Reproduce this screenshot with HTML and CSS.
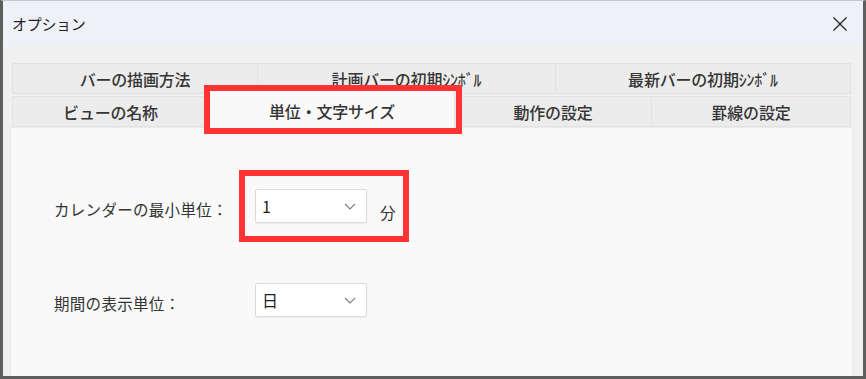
FILE: index.html
```html
<!DOCTYPE html>
<html lang="ja">
<head>
    <meta charset="UTF-8">
    <title>オプション</title>
    <link rel="stylesheet" href="styles.css">
</head>
<body>
    <div class="window">
        <header class="titlebar">
            <span class="title">オプション</span>
            <span class="close-btn" aria-label="閉じる">
                <svg width="16" height="16" viewBox="0 0 16 16"><path d="M1.5 1.5 L14.5 14.5 M14.5 1.5 L1.5 14.5" stroke="#222" stroke-width="1.3" fill="none"/></svg>
            </span>
        </header>
        <main class="content">
            <div class="tabs">
                <div class="tab-row row-top">
                    <div class="tab">バーの描画方法</div>
                    <div class="tab">計画バーの初期ｼﾝﾎﾞﾙ</div>
                    <div class="tab">最新バーの初期ｼﾝﾎﾞﾙ</div>
                </div>
                <div class="tab-row row-bottom">
                    <div class="tab">ビューの名称</div>
                    <div class="tab tab-active mark">単位・文字サイズ</div>
                    <div class="tab">動作の設定</div>
                    <div class="tab">罫線の設定</div>
                </div>
            </div>
            <section class="panel">
                <div class="field">
                    <span class="field-label">カレンダーの最小単位：</span>
                    <div class="field-group mark mark-field">
                        <div class="dropdown">
                            <span class="dropdown-value">1</span>
                            <svg class="chevron" width="12" height="7" viewBox="0 0 12 7"><path d="M1 1 L6 6 L11 1" stroke="#808080" stroke-width="1.2" fill="none"/></svg>
                        </div>
                        <span class="unit">分</span>
                    </div>
                </div>
                <div class="field field-second">
                    <span class="field-label">期間の表示単位：</span>
                    <div class="field-group">
                        <div class="dropdown">
                            <span class="dropdown-value">日</span>
                            <svg class="chevron" width="12" height="7" viewBox="0 0 12 7"><path d="M1 1 L6 6 L11 1" stroke="#808080" stroke-width="1.2" fill="none"/></svg>
                        </div>
                    </div>
                </div>
            </section>
        </main>
    </div>
</body>
</html>
```

FILE: styles.css
```css
* {
    box-sizing: border-box;
}

html, body {
    margin: 0;
    padding: 0;
}

body {
    font-family: "Noto Sans CJK JP", "Noto Sans", sans-serif;
    color: #333;
    background: #5e5e5e;
    width: 866px;
    height: 379px;
    overflow: hidden;
}

.window {
    width: 866px;
    height: 379px;
    background: #f0f0f0;
    border: 3px solid #5e5e5e;
    border-top: 1px solid #c9c9c9;
    display: flex;
    flex-direction: column;
}

.titlebar {
    height: 45px;
    flex: none;
    background: #eef2f8;
    display: flex;
    align-items: center;
    justify-content: space-between;
    padding: 0 15px 0 9px;
}

.title {
    font-size: 15px;
    color: #1f1f1f;
    letter-spacing: -0.3px;
}

.close-btn {
    display: flex;
    width: 16px;
    height: 16px;
}

.content {
    flex: 1;
    display: flex;
    flex-direction: column;
    padding: 17px 10px 0 7px;
}

.tabs {
    margin: 0 2px 0 2px;
    font-size: 16px;
    font-weight: 500;
    color: #353535;
}

.tab-row {
    display: grid;
    grid-template-rows: 31px;
    align-items: end;
}

.row-top {
    grid-template-columns: 246px 298px 295px;
    margin-bottom: 2px;
}

.row-bottom {
    grid-template-columns: 197px 246px 197px 199px;
}

.tab {
    height: 31px;
    display: flex;
    align-items: center;
    justify-content: center;
    background: #ececec;
    border: 1px solid #e2e2e2;
    border-left: none;
    white-space: nowrap;
    letter-spacing: -0.2px;
}

.tab:first-child {
    border-left: 1px solid #e2e2e2;
}

.tab-active {
    height: 38px;
    margin-bottom: -1px;
    padding-top: 2px;
    background: #f9f9f9;
    border: 1px solid #e4e4e4;
    border-bottom: none;
    z-index: 1;
}

.mark {
    position: relative;
}

.mark::after {
    content: "";
    position: absolute;
    top: -6px;
    left: -6px;
    right: -8px;
    bottom: -6px;
    border: 6px solid #ff3333;
    pointer-events: none;
}

.panel {
    flex: 1;
    background: #f9f9f9;
    border: 1px solid #ebebeb;
    border-bottom: none;
    padding: 61px 0 0 43px;
}

.field {
    display: flex;
    align-items: center;
    height: 34px;
}

.field-second {
    margin-top: 60px;
}

.field-label {
    width: 201px;
    font-size: 15.5px;
    color: #333;
    padding-top: 6px;
    letter-spacing: 0.3px;
}

.field-group {
    display: flex;
    align-items: center;
}

.mark-field::after {
    top: -19px;
    left: -16px;
    right: -13px;
    bottom: -19px;
}

.dropdown {
    width: 112px;
    height: 34px;
    background: #fff;
    border: 1px solid #dcdcdc;
    border-radius: 2px;
    box-shadow: 0 1px 1px rgba(0, 0, 0, 0.06);
    display: flex;
    align-items: center;
    justify-content: space-between;
    padding: 0 10px 0 6px;
}

.dropdown-value {
    font-size: 16px;
    color: #1e1e1e;
}

.chevron {
    flex: none;
}

.unit {
    margin-left: 13px;
    font-size: 15.5px;
    padding-top: 11px;
    color: #333;
}
```
